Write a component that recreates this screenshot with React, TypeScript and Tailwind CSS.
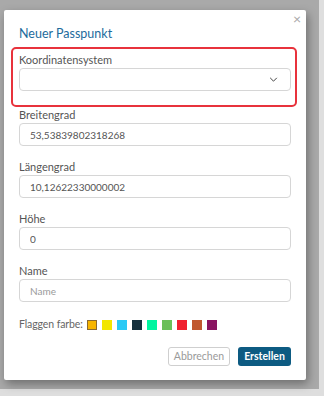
import React from "react";

const swatches = [
  "#f7b500",
  "#f2e600",
  "#29c9f5",
  "#15303d",
  "#00f5a0",
  "#6bbf59",
  "#f0202f",
  "#c0582f",
  "#8a1461",
];

function Field({ label, value, placeholder }: { label: string; value?: string; placeholder?: string }) {
  return (
    <div className="flex flex-col">
      <label className="text-[11px] leading-[14px] text-[#555]">{label}</label>
      <input
        readOnly
        defaultValue={value}
        placeholder={placeholder}
        className="mt-[1px] h-[23px] w-full rounded-[4px] border border-[#d6d6d6] bg-white pl-[10px] text-[10px] text-[#555] placeholder:text-[#9a9a9a] outline-none"
      />
    </div>
  );
}

export default function App() {
  return (
    <div className="h-[396px] w-[324px] overflow-hidden bg-[#dedede] font-['Lato','Open_Sans',sans-serif]">
      <div className="h-[389px] w-[319px] bg-[#a9a9a9] pl-[4px] pt-[10px]">
        <div className="relative flex h-[370px] w-[302px] flex-col rounded-[2px] bg-white px-[15px] pt-[16px] shadow-[2px_4px_10px_rgba(0,0,0,0.35)]">
          {/* close */}
          <button className="absolute right-[5px] top-[2px] text-[14px] leading-[14px] text-[#a8a8a8]">×</button>

          <h2 className="text-[12.5px] leading-[16px] text-[#1d6b9c]">Neuer Passpunkt</h2>

          {/* highlighted select */}
          <div className="-ml-[8px] -mr-[6px] mt-[5px] rounded-[5px] border-2 border-[#e8323c] pb-[14px] pl-[6px] pr-[4px] pt-[4px]">
            <label className="block text-[11px] leading-[14px] text-[#555]">Koordinatensystem</label>
            <div className="mt-[1px] flex h-[23px] items-center justify-end rounded-[4px] border border-[#d6d6d6] bg-white pr-[12px]">
              <svg viewBox="0 0 10 6" className="h-[5px] w-[9px]" fill="none" stroke="#444" strokeWidth="1.2">
                <path d="M1 1l4 4 4-4" />
              </svg>
            </div>
          </div>

          <div className="mt-[1px] flex flex-col gap-[14px]">
            <Field label="Breitengrad" value="53,53839802318268" />
            <Field label="Längengrad" value="10,12622330000002" />
            <Field label="Höhe" value="0" />
            <Field label="Name" placeholder="Name" />
          </div>

          <div className="mt-[16px] flex h-[14px] items-center">
            <span className="mr-[4px] text-[10.5px] tracking-[-0.1px] text-[#666]">Flaggen farbe:</span>
            <div className="flex gap-[5px]">
              {swatches.map((c, i) => (
                <span
                  key={c}
                  className={
                    i === 0
                      ? "h-[10px] w-[10px] border border-[#8a6a30]"
                      : "h-[10px] w-[10px]"
                  }
                  style={{ backgroundColor: c }}
                />
              ))}
            </div>
          </div>

          <div className="mt-[15px] flex justify-end gap-[8px]">
            <button className="h-[19px] w-[62px] rounded-[3px] border border-[#cfcfcf] bg-white text-[10.5px] text-[#9a9a9a]">
              Abbrechen
            </button>
            <button className="h-[19px] w-[53px] rounded-[3px] bg-[#0d5b82] text-[10.5px] font-bold text-white">
              Erstellen
            </button>
          </div>
        </div>
      </div>
    </div>
  );
}
